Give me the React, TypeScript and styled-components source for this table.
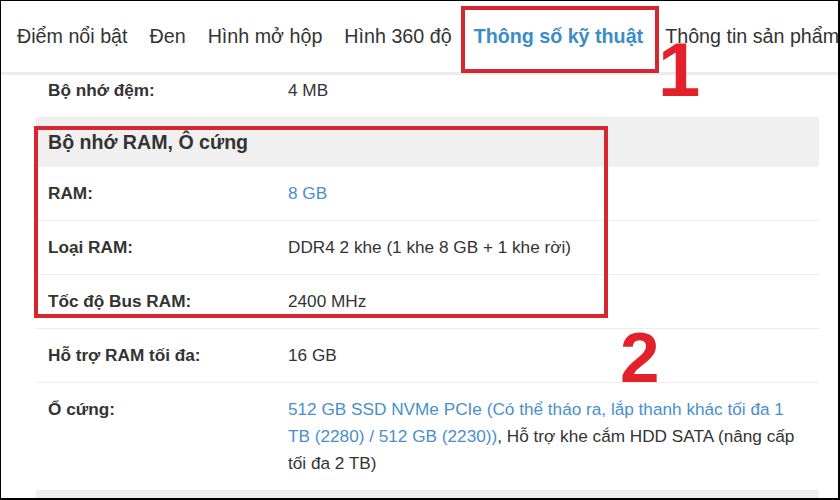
import React from "react";
import styled, { createGlobalStyle } from "styled-components";

const GlobalStyle = createGlobalStyle`
  html, body { margin: 0; padding: 0; background: #ffffff; }
  body { font-family: "Liberation Sans", Arial, sans-serif; color: #333333; }
  * { box-sizing: border-box; }
`;

const Frame = styled.div`
  position: relative;
  width: 840px;
  height: 500px;
  overflow: hidden;
  background: #ffffff;
  border-style: solid;
  border-color: #000000;
  border-width: 1px 2px 2px 1px;
  display: flex;
  flex-direction: column;
`;

const TabBar = styled.nav`
  flex: 0 0 auto;
  height: 74px;
  display: flex;
  align-items: center;
  padding: 0 0 1px 5px;
  border-bottom: 3px solid #ececec;
  background: #ffffff;
  white-space: nowrap;
  position: relative;
  z-index: 1;
`;

const Tab = styled.span<{ $active?: boolean }>`
  flex: 0 0 auto;
  padding: 0 11px;
  font-size: 19.7px;
  line-height: 27px;
  font-weight: ${(p) => (p.$active ? 700 : 400)};
  color: ${(p) => (p.$active ? "#3a8dc6" : "#333333")};
`;

const Content = styled.div`
  flex: 1 1 auto;
  overflow: hidden;
  padding: 0 19px 0 35px;
`;

const Table = styled.div`
  margin-top: -11px;
  display: flex;
  flex-direction: column;
`;

const Row = styled.div`
  display: grid;
  grid-template-columns: 252px 1fr;
  padding: 13px 0;
  border-bottom: 1px solid #ededed;
  font-size: 17.2px;
  line-height: 27px;
`;

const Label = styled.div`
  padding-left: 12px;
  font-weight: 700;
  font-size: 17.2px;
  color: #333333;
`;

const Value = styled.div`
  padding-right: 20px;
  color: #333333;
`;

const Link = styled.span`
  color: #4a8fcb;
`;

const SectionHeader = styled.div`
  background: #f0f0f0;
  min-height: 49px;
  padding: 11px 12px;
  font-size: 19.6px;
  line-height: 27px;
  font-weight: 700;
  color: #333333;
`;

const Highlight = styled.div<{ $x: number; $y: number; $w: number; $h: number }>`
  position: absolute;
  left: ${(p) => p.$x}px;
  top: ${(p) => p.$y}px;
  width: ${(p) => p.$w}px;
  height: ${(p) => p.$h}px;
  border: 4px solid #d6262f;
  pointer-events: none;
  z-index: 2;
`;

const Marker = styled.div<{ $x: number; $y: number; $size: number }>`
  position: absolute;
  left: ${(p) => p.$x}px;
  top: ${(p) => p.$y}px;
  font-family: "Liberation Sans", Arial, sans-serif;
  font-weight: 700;
  font-size: ${(p) => p.$size}px;
  line-height: 1;
  color: #e2212b;
  z-index: 3;
`;

const tabs = ["Điểm nổi bật", "Đen", "Hình mở hộp", "Hình 360 độ", "Thông số kỹ thuật", "Thông tin sản phẩm"];

export default function App() {
  return (
    <>
      <GlobalStyle />
      <Frame>
        <TabBar>
          {tabs.map((t) => (
            <Tab key={t} $active={t === "Thông số kỹ thuật"}>
              {t}
            </Tab>
          ))}
        </TabBar>
        <Content>
          <Table>
            <Row>
              <Label>Bộ nhớ đệm:</Label>
              <Value>4 MB</Value>
            </Row>
            <SectionHeader>Bộ nhớ RAM, Ô cứng</SectionHeader>
            <Row>
              <Label>RAM:</Label>
              <Value>
                <Link>8 GB</Link>
              </Value>
            </Row>
            <Row>
              <Label>Loại RAM:</Label>
              <Value>DDR4 2 khe (1 khe 8 GB + 1 khe rời)</Value>
            </Row>
            <Row>
              <Label>Tốc độ Bus RAM:</Label>
              <Value>2400 MHz</Value>
            </Row>
            <Row>
              <Label>Hỗ trợ RAM tối đa:</Label>
              <Value>16 GB</Value>
            </Row>
            <Row>
              <Label>Ổ cứng:</Label>
              <Value>
                <Link>512 GB SSD NVMe PCIe (Có thể tháo ra, lắp thanh khác tối đa 1 TB (2280) / 512 GB (2230))</Link>
                , Hỗ trợ khe cắm HDD SATA (nâng cấp tối đa 2 TB)
              </Value>
            </Row>
            <SectionHeader />
          </Table>
        </Content>
        <Highlight $x={460} $y={5} $w={198} $h={67} />
        <Highlight $x={33} $y={125} $w={574} $h={192} />
        <Marker $x={657} $y={31} $size={76}>1</Marker>
        <Marker $x={619} $y={321} $size={71}>2</Marker>
      </Frame>
    </>
  );
}
